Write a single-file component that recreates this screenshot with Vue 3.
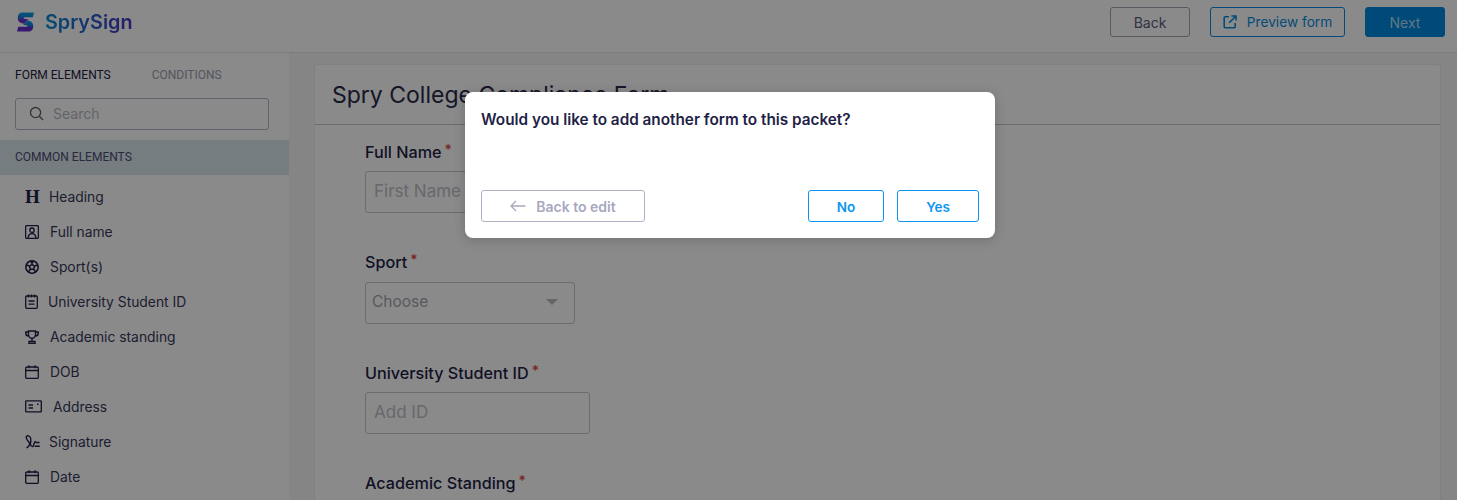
<script setup>
const items = [
  { label: 'Heading', icon: 'heading', gap: 10 },
  { label: 'Full name', icon: 'person', gap: 11 },
  { label: 'Sport(s)', icon: 'ball', gap: 11 },
  { label: 'University Student ID', icon: 'clip', gap: 10 },
  { label: 'Academic standing', icon: 'trophy', gap: 11 },
  { label: 'DOB', icon: 'cal', gap: 11 },
  { label: 'Address', icon: 'card', gap: 11 },
  { label: 'Signature', icon: 'sign', gap: 9 },
  { label: 'Date', icon: 'cal', gap: 11 },
]
</script>

<template>
  <div class="page">
    <header class="topbar">
      <div class="brand">
        <svg class="brand-mark" viewBox="0 0 17 20" width="17" height="20">
          <defs>
            <linearGradient id="sg" x1="0.5" y1="0" x2="0.5" y2="1">
              <stop offset="0" stop-color="#0aa2e6" />
              <stop offset="0.5" stop-color="#1a78d8" />
              <stop offset="0.6" stop-color="#6a30d0" />
              <stop offset="1" stop-color="#6a2fd0" />
            </linearGradient>
          </defs>
          <path fill="url(#sg)" d="M5 0.500H17l-1.200 4.700H7.500c-1 0-1.200 1.300-.2 1.500l4.200 .8-4.500 4.300C3 11 .8 9.500 .8 6 .8 2.800 2.400.5 5 .5z" />
          <path fill="url(#sg)" d="M12 19.500H0l1.200-4.700h8.300c1 0 1.200-1.300.2-1.500l-3.600-.6 4.500-4.300c3.500.5 5.600 2 5.600 5.600 0 3.200-1.600 5.500-4.200 5.500z" />
        </svg>
        <span class="brand-name">SprySign</span>
      </div>
      <div class="top-actions">
        <button class="btn btn-back">Back</button>
        <button class="btn btn-preview">
          <svg viewBox="0 0 14 14" width="14" height="14" fill="none" stroke="currentColor" stroke-width="1.6">
            <path d="M6 1.800H2.200a1 1 0 0 0-1 1v9a1 1 0 0 0 1 1h9a1 1 0 0 0 1-1V8" />
            <path d="M8.400 1h4.600v4.600M13 1 6.200 7.800" />
          </svg>
          Preview form
        </button>
        <button class="btn btn-next">Next</button>
      </div>
    </header>

    <div class="body">
      <aside class="sidebar">
        <div class="tabs">
          <span class="tab active">FORM ELEMENTS</span>
          <span class="tab">CONDITIONS</span>
        </div>
        <div class="search">
          <svg viewBox="0 0 16 16" width="15" height="15" fill="none" stroke="#5f5f66" stroke-width="1.4">
            <circle cx="7" cy="7" r="5.400" />
            <path d="m11 11 4 4" />
          </svg>
          <span>Search</span>
        </div>
        <div class="group-title">COMMON ELEMENTS</div>
        <ul class="elements">
          <li v-for="item in items" :key="item.label" :style="{ gap: item.gap + 'px' }">
            <span class="ico">
              <span v-if="item.icon === 'heading'" class="h-glyph">H</span>
              <svg v-else-if="item.icon === 'person'" viewBox="0 0 14 14" width="14" height="14" fill="none" stroke="currentColor" stroke-width="1.300">
                <rect x="0.600" y="0.600" width="12.800" height="12.800" rx="1.200" />
                <circle cx="7" cy="5.200" r="2.200" />
                <path d="M3 13c.3-3 1.800-4.400 4-4.400S10.700 10 11 13" />
              </svg>
              <svg v-else-if="item.icon === 'ball'" viewBox="0 0 14 14" width="14" height="14" fill="none" stroke="currentColor" stroke-width="1.500">
                <circle cx="7" cy="7" r="6.200" />
                <path d="M7 1v3.200M9.600 6l3.200-1.100M8.700 9.300l2 2.700M5.300 9.300l-2 2.700M4.400 6 1.200 4.900M7 4.400l2.500 1.800-.9 3H5.400l-.9-3z" />
                <path d="M3.200 1.500 7 3l3.800-1.500L7 .8zM13 7.500l-1.500-2.700 1.500-.5zM1 7.500l1.500-2.700L1 4.300z" fill="currentColor" stroke="none" />
              </svg>
              <svg v-else-if="item.icon === 'clip'" viewBox="0 0 13 15" width="13" height="15" fill="none" stroke="currentColor" stroke-width="1.300">
                <rect x="0.700" y="2" width="11.600" height="12.300" rx="1" />
                <path d="M3.500 0.400v3M6.500 0.400v3M9.500 0.400v3M3.500 7h6M3.500 10.200h6" />
              </svg>
              <svg v-else-if="item.icon === 'trophy'" viewBox="0 0 14 14" width="14" height="14" fill="none" stroke="currentColor" stroke-width="1.400">
                <path d="M3.500 1h7v3.800a3.500 3.500 0 0 1-7 0zM3.500 2H.8v1.500c0 1.300 1.200 2.500 3 2.500M10.500 2h2.700v1.500c0 1.300-1.200 2.500-3 2.500M7 8.300V11M4 13.200h6v-1.800H4z" />
              </svg>
              <svg v-else-if="item.icon === 'cal'" viewBox="0 0 14 14" width="14" height="14" fill="none" stroke="currentColor" stroke-width="1.300">
                <rect x="0.700" y="2" width="12.600" height="11.400" rx="1.200" />
                <path d="M0.700 5.500h12.600M4 0.300v3M10 0.300v3" />
              </svg>
              <svg v-else-if="item.icon === 'card'" viewBox="0 0 17 13" width="17" height="13" fill="none" stroke="currentColor" stroke-width="1.300">
                <rect x="0.700" y="0.800" width="15.600" height="11" rx="0.600" />
                <path d="M3.500 5h4.500M3.500 8h4.500" />
                <rect x="12" y="3.500" width="1.500" height="1.500" fill="currentColor" stroke="none" />
              </svg>
              <svg v-else viewBox="0 0 15 15" width="15" height="15" fill="none" stroke="currentColor" stroke-width="1.400">
                <path d="M1.500 14c3-2 4.800-6 4.200-9.500C5.300 1.800 2 .6 1.300 3c-.6 2.500 3 5 4.200 7.500.8 1.800 2.800 3.200 3.200.7.300-2.200.9-3.600 2-3.700M10.500 8.500h4M9.800 12.300h5" />
              </svg>
            </span>
            <span>{{ item.label }}</span>
          </li>
        </ul>
      </aside>

      <main class="main">
        <section class="card">
          <h1 class="card-title">Spry College Compliance Form</h1>
          <div class="fields">
            <div class="field">
              <label>Full Name<i>*</i></label>
              <div class="input w-name">First Name</div>
            </div>
            <div class="field">
              <label>Sport<i>*</i></label>
              <div class="input w-sport choose">
                <span>Choose</span>
                <b class="caret"></b>
              </div>
            </div>
            <div class="field">
              <label>University Student ID<i>*</i></label>
              <div class="input w-id">Add ID</div>
            </div>
            <div class="field">
              <label>Academic Standing<i>*</i></label>
            </div>
          </div>
        </section>
      </main>
    </div>

    <div class="overlay">
      <div class="modal">
        <p class="modal-text">Would you like to add another form to this packet?</p>
        <div class="modal-actions">
          <button class="mbtn mbtn-edit">
            <svg viewBox="0 0 16 12" width="16" height="12" fill="none" stroke="currentColor" stroke-width="1.300">
              <path d="M15.500 6H1M6 1 1 6l5 5" />
            </svg>
            Back to edit
          </button>
          <div class="modal-right">
            <button class="mbtn mbtn-no">No</button>
            <button class="mbtn mbtn-yes">Yes</button>
          </div>
        </div>
      </div>
    </div>
  </div>
</template>

<style>
html, body {
  margin: 0;
  background: #fafafa;
}
</style>

<style scoped>
.page {
  position: relative;
  width: 1457px;
  height: 500px;
  overflow: hidden;
  font-family: Inter, "Noto Sans", sans-serif;
  color: #1f1f47;
  background: #fafafa;
}

.topbar {
  height: 44px;
  padding: 0 12px 8px 17px;
  border-bottom: 1px solid #e6e6e6;
  background: #fff;
  display: flex;
  align-items: center;
  justify-content: space-between;
}

.brand {
  display: flex;
  align-items: center;
  gap: 11px;
}

.brand-name {
  font-size: 19.800px;
  font-weight: 600;
  background: linear-gradient(90deg, #0a8ad0, #4a35c0);
  -webkit-background-clip: text;
  background-clip: text;
  color: transparent;
}

.top-actions {
  display: flex;
  gap: 20px;
}

.btn {
  height: 30px;
  box-sizing: border-box;
  border-radius: 3px;
  font-family: inherit;
  font-size: 14px;
  display: flex;
  align-items: center;
  justify-content: center;
  padding: 0;
}

.btn-back {
  width: 80px;
  background: #fff;
  border: 1px solid #a5a5b5;
  color: #5d5d80;
}

.btn-preview {
  width: 135px;
  gap: 10px;
  background: #fff;
  border: 1px solid #0a8be0;
  color: #0a8be0;
  font-size: 13.700px;
}

.btn-next {
  width: 80px;
  border: 1px solid #0089e0;
  background: #0089e0;
  color: #b5dcf5;
}

.body {
  display: flex;
  height: 447px;
}

.sidebar {
  width: 289px;
  flex: none;
  background: #fff;
}

.tabs {
  display: flex;
  gap: 41px;
  padding: 15px 15px 0;
  font-family: Roboto, Inter, sans-serif;
  font-size: 12px;
  line-height: 14px;
}

.tab {
  color: #9d9db0;
}

.tab.active {
  color: #22223f;
}

.search {
  margin: 16px 20px 0 15px;
  height: 32px;
  box-sizing: border-box;
  border: 1px solid #b5b5c8;
  border-radius: 3px;
  display: flex;
  align-items: center;
  gap: 9px;
  padding: 0 0 2px 13px;
  font-size: 14px;
  color: #b8b8c8;
}

.group-title {
  margin-top: 10px;
  height: 33px;
  padding: 0 0 2px 15px;
  display: flex;
  align-items: center;
  font-family: Roboto, Inter, sans-serif;
  font-size: 12px;
  color: #4d4d72;
  background: #dbe7ee;
}

.elements {
  list-style: none;
  margin: 4px 0 0;
  padding: 0 0 0 25px;
}

.elements li {
  height: 35px;
  display: flex;
  align-items: center;
  font-size: 13.850px;
  color: #38385a;
}

.ico {
  display: flex;
  align-items: center;
  color: #1f1f47;
}

.h-glyph {
  font-family: "Liberation Serif", serif;
  font-weight: 700;
  font-size: 19px;
  line-height: 1;
  width: 14px;
}

.main {
  flex: 1;
  background: #f5f5f5;
  padding: 11px 16px 0 25px;
  min-width: 0;
}

.card {
  background: #fff;
  border: 1px solid #ececec;
  border-radius: 3px 3px 0 0;
  height: 500px;
}

.card-title {
  margin: 0;
  height: 59px;
  border-bottom: 1px solid #c8c8cc;
  padding-left: 17px;
  display: flex;
  align-items: center;
  font-size: 23px;
  font-weight: 400;
  color: #2a2a4a;
}

.fields {
  padding: 17px 0 0 50px;
}

.field {
  height: 110.400px;
}

.field label {
  display: block;
  font-size: 16.200px;
  font-weight: 500;
  line-height: 20px;
  color: #1f1f47;
}

.field i {
  color: #e04545;
  font-style: normal;
  font-size: 14px;
  margin-left: 3px;
  position: relative;
  top: -3px;
}

.input {
  margin-top: 8.200px;
  height: 42px;
  box-sizing: border-box;
  border: 1px solid #c8c8cc;
  border-radius: 3px;
  display: flex;
  align-items: center;
  padding: 0 0 2px 8px;
  font-size: 17px;
  color: #c0c0c8;
}

.w-name { width: 225px; }
.w-id { width: 225px; }

.w-sport {
  width: 210px;
  padding: 0 16px 2px 6px;
  justify-content: space-between;
  font-size: 15.500px;
}

.choose {
  color: #a5a5b0;
}

.caret {
  width: 0;
  height: 0;
  border-left: 6.500px solid transparent;
  border-right: 6.500px solid transparent;
  border-top: 6.500px solid #bdbdc5;
}

.overlay {
  position: absolute;
  inset: 0;
  background: rgba(0, 0, 0, 0.46);
}

.modal {
  position: absolute;
  left: 465px;
  top: 92px;
  width: 530px;
  height: 146px;
  box-sizing: border-box;
  background: #fff;
  border-radius: 8px;
  padding: 16px;
  display: flex;
  flex-direction: column;
  justify-content: space-between;
  box-shadow: 0 2px 12px rgba(0, 0, 0, 0.18);
}

.modal-text {
  margin: 0;
  font-size: 15.300px;
  line-height: 24px;
  font-weight: 600;
  color: #1f1f47;
}

.modal-actions {
  display: flex;
  justify-content: space-between;
}

.modal-right {
  display: flex;
  gap: 13px;
}

.mbtn {
  height: 32px;
  box-sizing: border-box;
  background: #fff;
  border-radius: 3px;
  font-family: inherit;
  font-size: 14px;
  font-weight: 600;
  display: flex;
  align-items: center;
  justify-content: center;
  padding: 0;
}

.mbtn-edit {
  width: 164px;
  gap: 10px;
  border: 1px solid #b0b0c5;
  color: #a8a8c0;
}

.mbtn-no,
.mbtn-yes {
  border: 1px solid #0a96f0;
  color: #0a96f0;
  padding-top: 1px;
  font-size: 13.500px;
}

.mbtn-no { width: 76px; }
.mbtn-yes { width: 82px; }
</style>
